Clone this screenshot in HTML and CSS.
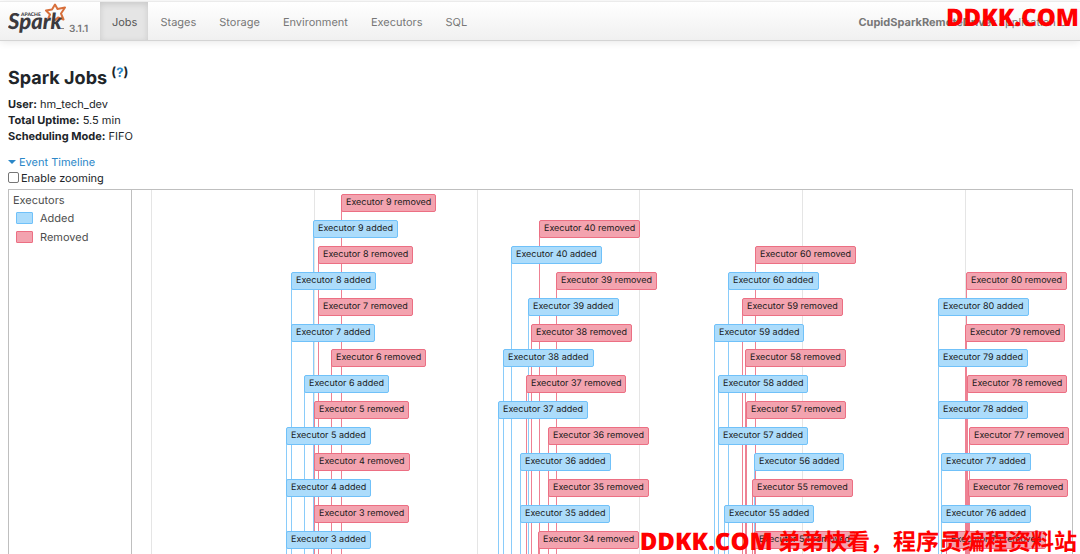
FILE: index.html
```html
<!DOCTYPE html>
<html lang="en">

<head>
    <meta charset="utf-8">
    <title>Spark Jobs</title>
    <link rel="stylesheet" href="styles.css">
</head>

<body>
    <header class="navbar">
        <a class="brand" href="#">
            <svg class="logo" viewBox="0 0 58 34" role="img" aria-label="Apache Spark">
                <text class="logo-apache" x="13" y="14">APACHE</text>
                <path class="logo-star" d="M40 17 L42 12.500 L38 8.500 L44 7.500 L47 2.500 L49.500 7 L57 5.500 L53 11.500 L55.500 17.500 L50 15.500 L46.500 18.500" />
                <text class="logo-name" x="0" y="27">Spark</text>
                <path class="logo-tm" d="M53 26.500H56" />
            </svg>
            <span class="version">3.1.1</span>
        </a>
        <nav class="tabs">
            <a class="active" href="#">Jobs</a>
            <a href="#">Stages</a>
            <a href="#">Storage</a>
            <a href="#">Environment</a>
            <a href="#">Executors</a>
            <a href="#">SQL</a>
        </nav>
        <p class="app-name"><strong>CupidSparkRemoteDriver</strong> application UI</p>
    </header>

    <main>
        <h1>Spark Jobs <sup>(<a href="#">?</a>)</sup></h1>
        <ul class="summary">
            <li><strong>User:</strong> hm_tech_dev</li>
            <li><strong>Total Uptime:</strong> 5.5 min</li>
            <li><strong>Scheduling Mode:</strong> FIFO</li>
        </ul>
        <a class="expand" href="#timeline"><span class="caret"></span>Event Timeline</a>
        <div class="zooming">
            <input type="checkbox" id="zoom">
            <label for="zoom">Enable zooming</label>
        </div>
        <section class="timeline" id="timeline">
            <div class="groups">
                <div>Executors</div>
                <div class="legend"><i class="swatch added"></i>Added</div>
                <div class="legend"><i class="swatch removed"></i>Removed</div>
            </div>
            <div class="chart" id="chart"></div>
        </section>
    </main>

    <div class="mark mark-top"><span class="latin">DDKK.COM</span></div>
    <div class="mark mark-bottom"><span class="latin">DDKK.COM</span> 弟弟快看，程序员编程资料站</div>

    <script src="timeline.js"></script>
</body>

</html>
```

FILE: styles.css
```css
* {
    box-sizing: border-box;
}

body {
    margin: 0;
    height: 100vh;
    display: flex;
    flex-direction: column;
    overflow: hidden;
    position: relative;
    background-color: #fff;
    color: #212529;
    font-family: Inter, "Liberation Sans", sans-serif;
    font-size: 11px;
    line-height: 16px;
    text-rendering: geometricPrecision;
}

a {
    color: #2b87c8;
    text-decoration: none;
}

.navbar {
    display: flex;
    flex: none;
    height: 40px;
    margin-top: 1px;
    padding-right: 10px;
    border-top: 1px solid #ebebeb;
    border-bottom: 1px solid #d4d4d4;
    background: linear-gradient(#fff, #f0f0f0);
    box-shadow: 0 1px 8px rgba(0, 0, 0, .1);
}

.brand {
    display: flex;
    width: 100px;
    padding-left: 8px;
    color: #777;
}

.logo {
    width: 58px;
    height: 34px;
}

.logo-name {
    font: italic 900 22px Lato, sans-serif;
    fill: #3c3a3e;
}

.logo-apache {
    font: 900 5px Lato, sans-serif;
    fill: #3c3a3e;
}

.logo-star {
    fill: none;
    stroke: #d8703c;
    stroke-width: 2;
    stroke-linejoin: round;
}

.logo-tm {
    stroke: #888;
}

.version {
    padding: 19px 0 0 3px;
    font-size: 10px;
    font-weight: 600;
}

.tabs {
    display: flex;
}

.tabs a {
    padding: 12px 11px 0 12px;
    color: #777;
}

.tabs .active {
    background-color: #e5e5e5;
    box-shadow: inset 0 2px 6px rgba(0, 0, 0, .13);
    color: #555;
}

.app-name {
    margin: 12px 0 0 auto;
    color: #777;
    white-space: nowrap;
}

main {
    display: flex;
    flex: 1;
    flex-direction: column;
    min-height: 0;
    padding: 24px 7px 0 8px;
}

h1 {
    margin: 0 0 3px;
    font-size: 18px;
    font-weight: 700;
    line-height: 28px;
}

sup {
    font-size: 13px;
    line-height: 0;
}

.summary {
    margin: 0 0 10px;
    padding: 0;
    list-style: none;
}

.expand {
    display: flex;
    align-items: center;
}

.caret {
    margin-right: 3px;
    border: 4px solid transparent;
    border-top-color: #2b87c8;
    border-bottom: 0;
}

.zooming {
    display: flex;
    align-items: center;
    gap: 2px;
    margin-bottom: 3px;
}

.zooming input {
    appearance: none;
    width: 11px;
    height: 11px;
    margin: 0 0 2px;
    border: 1px solid #767676;
    border-radius: 2px;
    background-color: #fff;
}

.zooming input:checked {
    background-color: #2b87c8;
}

.timeline {
    display: flex;
    flex: 1;
    min-height: 0;
    border: 1px solid #bfbfbf;
    border-bottom: 0;
}

.groups {
    width: 123px;
    padding: 2px 4px;
    border-right: 1px solid #bfbfbf;
    color: #4d4d4d;
}

.legend {
    display: flex;
    align-items: center;
    gap: 7px;
    margin: 2px 0 3px 3px;
}

.swatch {
    width: 17px;
    height: 12px;
    border: 1px solid;
    border-radius: 1px;
}

.added {
    border-color: #70c1f9;
    background-color: #acdcfb;
}

.removed {
    border-color: #ec6f83;
    background-color: #f3a3af;
}

.chart {
    flex: 1;
    position: relative;
    overflow: hidden;
}

.grid,
.stem {
    position: absolute;
    top: 0;
    bottom: 0;
    border-left: 1px solid #e5e5e5;
}

.stem.added {
    border-left-color: #8accfa;
}

.stem.removed {
    border-left-color: #ee8193;
}

.event {
    position: absolute;
    height: 18px;
    padding: 0 4px;
    border: 1px solid;
    border-radius: 2px;
    color: #1a1a1a;
    font-size: 9px;
    line-height: 16px;
    white-space: nowrap;
}

.event.added {
    border-color: #70c1f9;
}

.event.removed {
    border-color: #ec6f83;
}

.mark {
    position: absolute;
    color: #f00;
    font: 700 23px/28px "Noto Sans CJK SC", sans-serif;
    white-space: nowrap;
}

.latin {
    font-family: "Open Sans", sans-serif;
    font-size: 24px;
    font-weight: 800;
}

.mark-top {
    top: 2px;
    right: 1px;
}

.mark-bottom {
    right: 3px;
    bottom: -2px;
}
```

FILE: timeline.js
```javascript
(function() {
    const WIDTH = 940;
    const ROW = 25.9;

    // [executor, state, x, row]
    const events = [
        [9, 'removed', 209, 0], [9, 'added', 181, 1],
        [8, 'removed', 186, 2], [8, 'added', 159, 3],
        [7, 'removed', 186, 4], [7, 'added', 159, 5],
        [6, 'removed', 199, 6], [6, 'added', 172, 7],
        [5, 'removed', 182, 8], [5, 'added', 154, 9],
        [4, 'removed', 182, 10], [4, 'added', 154, 11],
        [3, 'removed', 182, 12], [3, 'added', 154, 13],
        [40, 'removed', 407, 1], [40, 'added', 379, 2],
        [39, 'removed', 424, 3], [39, 'added', 396, 4],
        [38, 'removed', 399, 5], [38, 'added', 371, 6],
        [37, 'removed', 394, 7], [37, 'added', 366, 8],
        [36, 'removed', 416, 9], [36, 'added', 388, 10],
        [35, 'removed', 416, 11], [35, 'added', 388, 12],
        [34, 'removed', 406, 13],
        [60, 'removed', 623, 2], [60, 'added', 596, 3],
        [59, 'removed', 610, 4], [59, 'added', 582, 5],
        [58, 'removed', 613, 6], [58, 'added', 586, 7],
        [57, 'removed', 614, 8], [57, 'added', 586, 9],
        [56, 'added', 622, 10],
        [55, 'removed', 620, 11], [55, 'added', 592, 12],
        [54, 'removed', 622, 13],
        [80, 'removed', 834, 3], [80, 'added', 806, 4],
        [79, 'removed', 833, 5], [79, 'added', 806, 6],
        [78, 'removed', 835, 7], [78, 'added', 806, 8],
        [77, 'removed', 837, 9], [77, 'added', 809, 10],
        [76, 'removed', 836, 11], [76, 'added', 809, 12],
        [75, 'removed', 814, 13]
    ];

    let out = '';
    for (let x = 19; x < WIDTH; x += 162.8) {
        out += `<div class="grid" style="left:${x / WIDTH * 100}%"></div>`;
    }
    // stems first so that every box covers them
    events.forEach(function([id, state, x, row]) {
        out += `<div class="stem ${state}" style="left:${x / WIDTH * 100}%;top:${Math.round(row * ROW) + 20}px"></div>`;
    });
    events.forEach(function([id, state, x, row]) {
        out += `<div class="event ${state}" style="left:${x / WIDTH * 100}%;top:${Math.round(row * ROW) + 4}px">Executor ${id} ${state}</div>`;
    });
    document.querySelector('#chart').innerHTML = out;
})();
```
